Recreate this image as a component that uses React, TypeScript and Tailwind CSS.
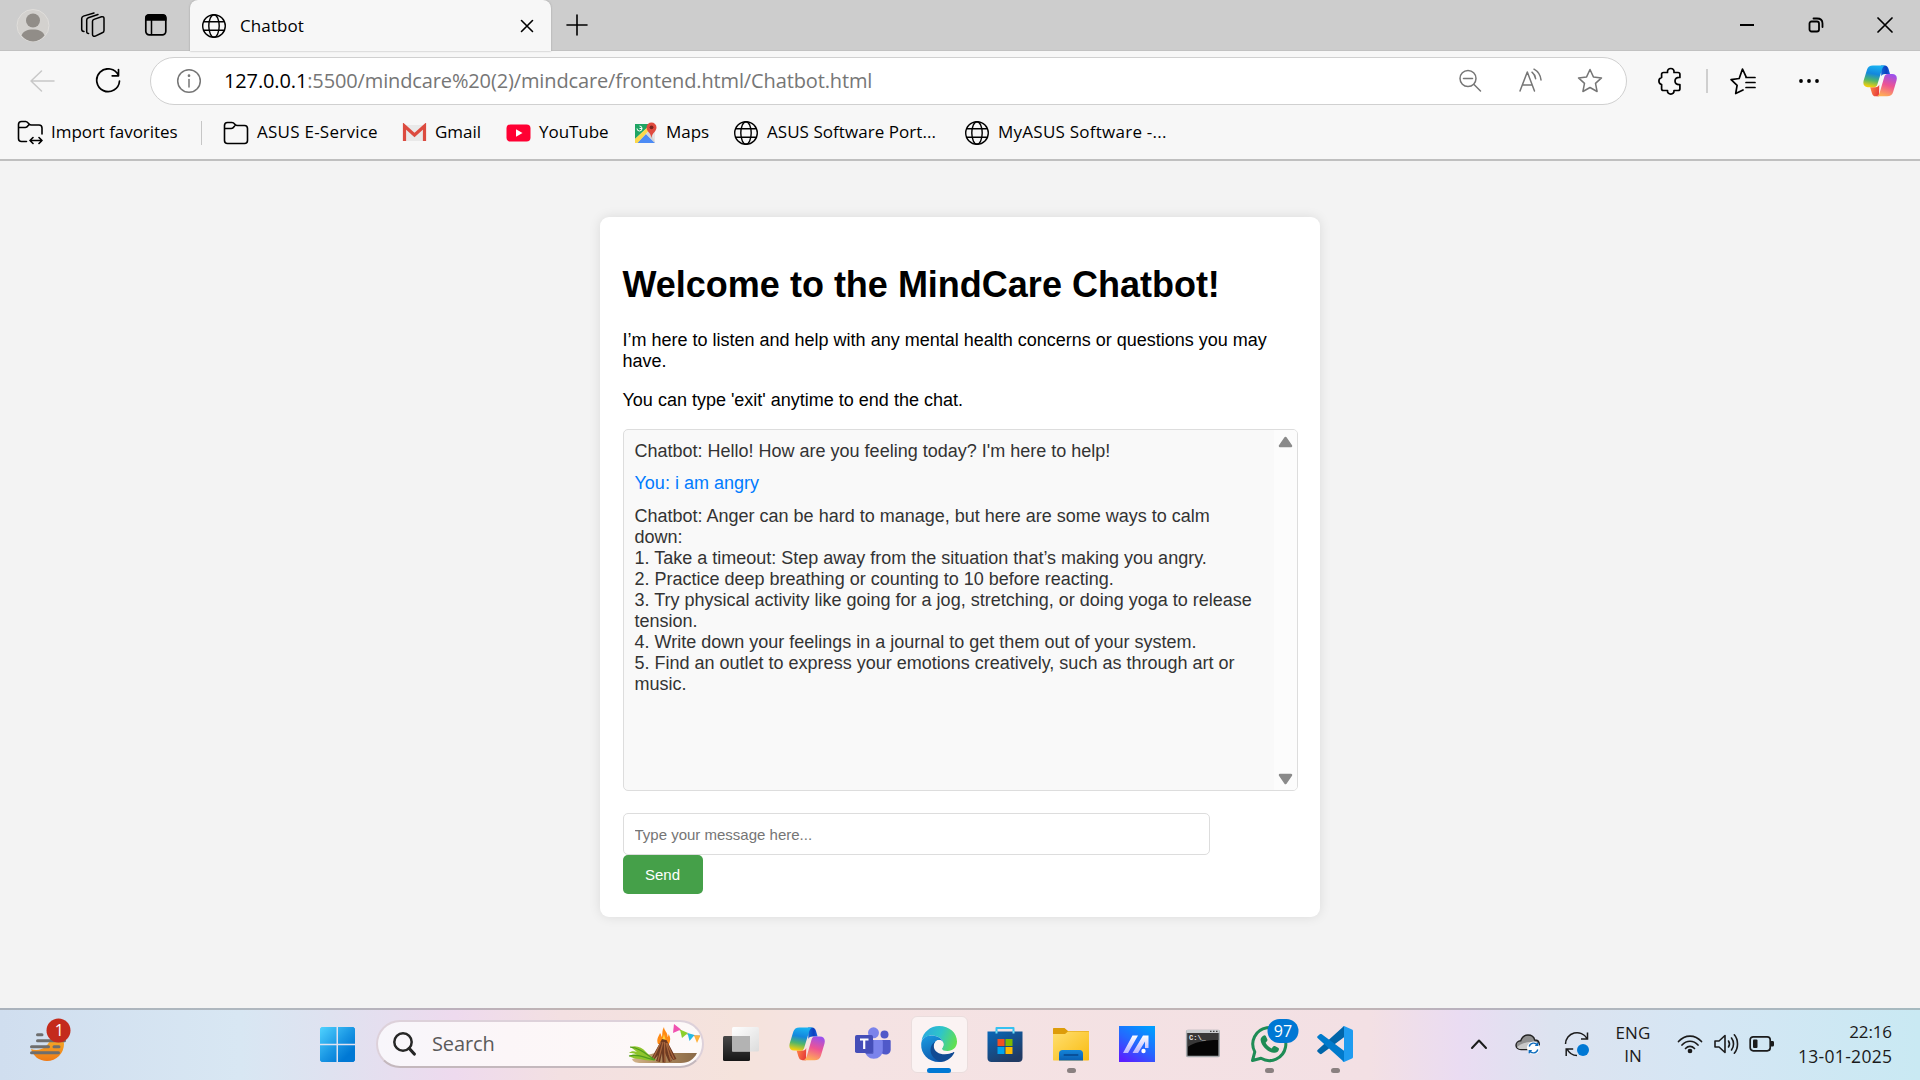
import React from "react";

type Kids = { children?: React.ReactNode };

function Line({
  w,
  h,
  vb,
  sw = 1.5,
  className = "",
  children,
}: Kids & { w: number; h: number; vb?: string; sw?: number; className?: string }) {
  return (
    <svg
      width={w}
      height={h}
      viewBox={vb ?? `0 0 ${w} ${h}`}
      fill="none"
      stroke="currentColor"
      strokeWidth={sw}
      strokeLinecap="round"
      strokeLinejoin="round"
      className={`block shrink-0 ${className}`}
    >
      {children}
    </svg>
  );
}

function Globe({ className = "" }: { className?: string }) {
  return (
    <Line w={26} h={26} sw={1.4} className={className}>
      <circle cx="13" cy="13" r="11.3" />
      <ellipse cx="13" cy="13" rx="5.2" ry="11.3" />
      <path d="M2.6 8.8h20.8M2.6 17.2h20.8" />
    </Line>
  );
}

function Copilot({ size, id }: { size: number; id: string }) {
  return (
    <svg width={size} height={size} viewBox="0 0 36 36" className="block shrink-0">
      <defs>
        <linearGradient id={id + "a"} x1="0.6" y1="0" x2="0.4" y2="1">
          <stop offset="0" stopColor="#1ab4f2" />
          <stop offset="0.4" stopColor="#1387dd" />
          <stop offset="0.7" stopColor="#4fb56c" />
          <stop offset="1" stopColor="#f2cf0c" />
        </linearGradient>
        <linearGradient id={id + "b"} x1="0.7" y1="0" x2="0.4" y2="1">
          <stop offset="0" stopColor="#9a50ee" />
          <stop offset="0.5" stopColor="#ee5493" />
          <stop offset="1" stopColor="#ffad55" />
        </linearGradient>
        <linearGradient id={id + "c"} x1="0" y1="0" x2="1" y2="0">
          <stop offset="0" stopColor="#1268d6" />
          <stop offset="0.6" stopColor="#0c40c0" />
          <stop offset="1" stopColor="#1a61de" />
        </linearGradient>
        <linearGradient id={id + "d"} x1="0" y1="0" x2="1" y2="0.4">
          <stop offset="0" stopColor="#ff8a48" />
          <stop offset="1" stopColor="#e8403a" />
        </linearGradient>
      </defs>
      <path d="M19 1.5h4c2.2 0 3.3 1.4 4 3.6l1.6 5.4h-5.2c-2 0-3.2.7-4 2.4z" fill={`url(#${id}c)`} />
      <path d="M17 34.2h-3.6c-2.2 0-3.3-1.4-4-3.6L7.6 24.500h5.800c2 0 3-.8 3.800-2.600z" fill={`url(#${id}d)`} />
      <path d="M10.500 1.500h14c-2.300 0-3.600 1.600-4.400 4.200l-4.900 16c-.6 2-1.700 2.800-3.600 2.800H5.200C1 24.500-.3 21.600.7 17.600L4.300 5.800c.9-2.900 2.900-4.300 6.200-4.300z" fill={`url(#${id}a)`} />
      <path d="M25.500 34.200h-12c2.300 0 3.500-1.600 4.300-4.200l4.700-16.200c.6-2.200 1.700-3.300 3.900-3.300h4.400c4.200 0 5.700 2.800 4.700 6.900l-3.600 12.300c-.9 3.100-3 4.500-6.400 4.500z" fill={`url(#${id}b)`} />
    </svg>
  );
}

function TabStrip() {
  return (
    <div className="flex h-[51px] shrink-0 border-b border-[#c2c2c2] bg-[#cdcdcd] text-black">
      <div className="flex w-[190px] items-center pl-4">
        <svg width="34" height="42" viewBox="0 0 34 42" className="block">
          <circle cx="17" cy="21.500" r="16" fill="#d3d1ce" stroke="#e0dedb" />
          <circle cx="17" cy="16.500" r="7" fill="#918d88" />
          <path d="M5.500 31.500C7 27.500 11 25.600 17 25.600s10 1.900 11.500 5.900A16 16 0 0 1 17 37.500a16 16 0 0 1-11.500-6z" fill="#918d88" />
        </svg>
        <Line w={26} h={26} sw={1.5} className="ml-[30px]">
          <path d="M12.500 9.300c0-1 .6-1.500 1.500-1.900l7.500-2.600c1.400-.4 2.500.2 2.500 1.600v12c0 1.300-.5 2-1.700 2.400l-7 3.300c-1.600.5-2.800-.1-2.800-1.600z" />
          <path d="M8.600 21.500c-1.200 0-1.900-.7-1.900-2V8c0-1.200.6-1.900 1.600-2.300L18 2.500" />
          <path d="M4 19.500c-1.500 0-2.300-.8-2.300-2.200V6.500c0-1.200.6-2 1.700-2.400L14 1" />
        </Line>
        <Line w={24} h={24} sw={1.7} className="ml-[38px]">
          <rect x="1.800" y="1.800" width="20" height="20" rx="3.500" />
          <path d="M2 4.500C2 3 3 2 4.500 2h14.700c1.500 0 2.500 1 2.500 2.500V7H2z" fill="currentColor" />
          <path d="M7.500 7v14.500" strokeWidth="1.500" />
        </Line>
      </div>
      <div className="flex h-[51px] w-[361px] items-center rounded-t-lg bg-[#f7f7f7] pl-[11px] shadow-[0_0_2px_#999]">
        <Globe />
        <span className="ml-[13px] text-[17px] tracking-[0.1px]">Chatbot</span>
        <Line w={14} h={14} sw={1.6} className="mr-[17px] ml-auto">
          <path d="M1.500 1.500l11 11M12.500 1.500l-11 11" />
        </Line>
      </div>
      <Line w={22} h={22} sw={1.6} className="mt-[14px] ml-[15px]">
        <path d="M11 1v20M1 11h20" />
      </Line>
      <div className="ml-auto flex items-center gap-[53px] pr-[27px]">
        <Line w={16} h={16} sw={2}>
          <path d="M1 8h14" strokeLinecap="butt" />
        </Line>
        <Line w={16} h={16} sw={1.8}>
          <rect x="1.500" y="4.500" width="9.500" height="10" rx="2" />
          <path d="M5.500 1.500h3.500c3.500 0 5.500 1.800 5.500 5V10" />
        </Line>
        <Line w={16} h={16} sw={1.7}>
          <path d="M1 1l14 14M15 1L1 15" />
        </Line>
      </div>
    </div>
  );
}

function Toolbar() {
  return (
    <div className="flex h-[60px] shrink-0 items-center">
      <Line w={26} h={24} sw={1.5} className="ml-[29px] text-[#c8c8c8]">
        <path d="M12.500 2L2 12l10.500 10M2 12h23" />
      </Line>
      <Line w={26} h={26} sw={1.7} className="ml-[40px] text-black">
        <path d="M23.500 7.500A11.400 11.400 0 1 0 24.500 13M23.500 1.500v6.300h-6.300" />
      </Line>
      <div className="ml-[29px] flex h-12 w-[1477px] items-center rounded-full border border-[#d0d0d0] bg-white pl-[25px] text-[#767676]">
        <Line w={26} h={26} sw={1.5}>
          <circle cx="13" cy="13" r="11.300" />
          <path d="M13 11.500V19" />
          <circle cx="13" cy="7.700" r=".6" fill="currentColor" />
        </Line>
        <span className="ml-[22px] text-[20px] tracking-[-0.13px] whitespace-nowrap">
          <span className="text-black">127.0.0.1</span>:5500/mindcare%20(2)/mindcare/frontend.html/Chatbot.html
        </span>
        <Line w={24} h={24} sw={1.5} className="ml-auto">
          <circle cx="10" cy="9.500" r="8" />
          <path d="M16 15.500l6.500 6.500M5.500 9.500h9" />
        </Line>
        <Line w={26} h={26} sw={1.5} className="ml-[36px]">
          <path d="M2 23L9.300 4 16.500 23M4.600 17h9.500M14 4.200c2 1.600 3.200 3.600 3.600 6.500M16 1.200c4 2.200 6.400 5.800 7 10.700" />
        </Line>
        <Line w={26} h={26} sw={1.5} className="mr-[23px] ml-[33px]">
          <path d="M13 1.500l3.400 7.400 8.100 1-6 5.500 1.600 8.100-7.100-4-7.100 4 1.600-8.100-6-5.500 8.100-1z" />
        </Line>
      </div>
      <Line w={26} h={28} sw={1.7} className="ml-[31px] text-black">
        <path d="M5.500 5.500h4c-.3-2.600 1.100-4 3.300-4s3.500 1.400 3.200 4h4c1.100 0 1.900.7 1.900 1.800V10.500c-3.300-.3-4.900 1.200-4.900 3.500s1.600 3.800 4.900 3.500v4.200c0 1.200-.8 1.800-1.900 1.800h-4c.2 2.400-1.200 3.600-3.200 3.600s-3.500-1.200-3.300-3.600h-4c-1.100 0-1.900-.7-1.900-1.800V17.500c-1.900-.6-2.700-1.800-2.700-3.500s.8-2.900 2.700-3.500V7.300c0-1.100.8-1.800 1.900-1.800z" />
      </Line>
      <div className="ml-[22px] h-6 w-[2px] bg-[#cfcfcf]" />
      <Line w={26} h={28} sw={1.7} className="ml-[22px] text-black">
        <path d="M13 23l-7.300 3.500 1.400-8.200-6-5.600 8.100-1.200L12.500 2l3.600 7.800M16 10.500h9M16 15.500h9M16 20.500h9" />
      </Line>
      <svg width="22" height="6" viewBox="0 0 22 6" className="ml-[42px] block">
        <circle cx="3" cy="3" r="1.900" />
        <circle cx="11" cy="3" r="1.900" />
        <circle cx="19" cy="3" r="1.900" />
      </svg>
      <div className="ml-[43px]">
        <Copilot size={34} id="tb" />
      </div>
    </div>
  );
}

function Folder({ arrows = false }: { arrows?: boolean }) {
  return (
    <Line w={26} h={26} sw={1.6}>
      {arrows ? (
        <path d="M9.500 21.500H4.500c-2 0-3-1-3-3V4.500c0-2 1-3 3-3h4.300c1.300 0 2 .8 3 2.200.7 1 1.500 1.300 2.700 1.300h7.500c2 0 3 1 3 3v6M1.500 7.500h6.800c1.500 0 2-.7 3.200-2.300M13 20.500h12M16 17.500l-3 3 3 3M22 17.500l3 3-3 3" />
      ) : (
        <path d="M4.500 23.500h17c2 0 3-1 3-3V8.500c0-2-1-3-3-3h-7c-1.200 0-2-.3-2.700-1.300C10.800 2.800 10 2.500 8.800 2.500H4.500c-2 0-3 1-3 3v15c0 2 1 3 3 3zM1.500 8.500h6.800c1.500 0 2-.7 3.200-2.300" />
      )}
    </Line>
  );
}

function Bookmark({
  icon,
  width,
  label,
  spacing = "tracking-[-0.05px]",
}: {
  icon: React.ReactNode;
  width: string;
  label: string;
  spacing?: string;
}) {
  return (
    <div className={`flex shrink-0 items-center gap-2 ${width}`}>
      {icon}
      <span className={`-mt-[2px] text-[17px] whitespace-nowrap ${spacing}`}>{label}</span>
    </div>
  );
}

function Bookmarks() {
  return (
    <div className="flex h-[50px] shrink-0 items-center border-b-2 border-[#bfbfbf] pb-1 pl-[17px] text-black">
      <Bookmark width="w-[184px]" icon={<Folder arrows />} label="Import favorites" />
      <div className="mr-[21px] h-6 w-px bg-[#c6c6c6]" />
      <Bookmark width="w-[179px]" icon={<Folder />} label="ASUS E-Service" spacing="tracking-[0.25px]" />
      <Bookmark
        width="w-[104px]"
        label="Gmail"
        icon={
          <svg width="25" height="20" viewBox="0 0 25 20" className="block">
            <path d="M2 2h21v16H2z" fill="#e9e9e9" />
            <path d="M2.500 18V3l10 9 10-9v15" fill="none" stroke="#dc4b3f" strokeWidth="3.200" />
          </svg>
        }
      />
      <Bookmark
        width="w-[127px]"
        label="YouTube"
        icon={
          <svg width="25" height="18" viewBox="0 0 25 18" className="block">
            <rect x="0.500" y="0.500" width="24" height="17" rx="4" fill="#ff0033" />
            <path d="M10 5.200l6.500 3.800-6.500 3.800z" fill="#fff" />
          </svg>
        }
      />
      <Bookmark
        width="w-[100px]"
        label="Maps"
        icon={
          <svg width="25" height="24" viewBox="0 0 25 24" className="block">
            <path d="M2 3h20v19H2z" fill="#e5e5e5" />
            <path d="M2 3h16L2 18z" fill="#1fa463" />
            <path d="M4 22l9-9 9 9z" fill="#4c8bf5" />
            <path d="M2 18L17 4l2 2L4.500 22H2z" fill="#fbd84b" />
            <path d="M13 13l4-4 5 13z" fill="#d3d3d3" />
            <path d="M18.500 1.500a5 5 0 0 1 5 5c0 4-4.200 5-5 10.500-.8-5.500-5-6.500-5-10.500a5 5 0 0 1 5-5z" fill="#e04b3f" />
            <circle cx="18.500" cy="6.300" r="1.900" fill="#7b231e" />
            <path d="M4 7.500a2.500 2.500 0 1 0 2.500-2.500M6.500 7.500H9" stroke="#fff" strokeWidth="1" fill="none" />
          </svg>
        }
      />
      <Bookmark width="w-[231px]" icon={<Globe />} label="ASUS Software Port..." spacing="tracking-[0.05px]" />
      <Bookmark width="w-[210px]" icon={<Globe />} label="MyASUS Software -..." spacing="tracking-[0.25px]" />
    </div>
  );
}

const tips = [
  "Chatbot: Anger can be hard to manage, but here are some ways to calm down:",
  "1. Take a timeout: Step away from the situation that’s making you angry.",
  "2. Practice deep breathing or counting to 10 before reacting.",
  "3. Try physical activity like going for a jog, stretching, or doing yoga to release tension.",
  "4. Write down your feelings in a journal to get them out of your system.",
  "5. Find an outlet to express your emotions creatively, such as through art or music.",
];

function ChatCard() {
  return (
    <div className="mt-14 flex h-[700px] w-[720px] flex-col rounded-[9px] bg-white px-[22.5px] pt-[23px] font-['Liberation_Sans',Arial,sans-serif] text-[18px] leading-[21px] text-black shadow-[0_0_12px_rgba(0,0,0,0.1)]">
      <h1 className="mt-6 text-[36px] leading-[41px] font-bold whitespace-nowrap">Welcome to the MindCare Chatbot!</h1>
      <p className="mt-[25px]">I’m here to listen and help with any mental health concerns or questions you may have.</p>
      <p className="mt-[18px]">You can type 'exit' anytime to end the chat.</p>
      <div className="mt-[18px] flex h-[362px] w-[675px] shrink-0 overflow-hidden rounded-[5px] border border-[#dddddd] bg-[#f9f9f9] text-[#333333]">
        <div className="flex w-[650px] flex-col gap-[11px] py-[11px] pr-[11px] pl-[11px]">
          <p>Chatbot: Hello! How are you feeling today? I'm here to help!</p>
          <p className="text-[#007bff]">You: i am angry</p>
          <div className="mt-[1px]">
            {tips.map((t) => (
              <p key={t}>{t}</p>
            ))}
          </div>
        </div>
        <div className="flex flex-1 flex-col items-center justify-between bg-[#fcfcfc] pt-[5px] pb-1">
          <svg width="15" height="13" viewBox="0 0 15 13" className="block">
            <path d="M7.500 3L13 11H2z" fill="#8a8a8a" stroke="#8a8a8a" strokeWidth="2.500" strokeLinejoin="round" />
          </svg>
          <svg width="15" height="13" viewBox="0 0 15 13" className="block">
            <path d="M7.500 10L13 2H2z" fill="#8a8a8a" stroke="#8a8a8a" strokeWidth="2.500" strokeLinejoin="round" />
          </svg>
        </div>
      </div>
      <input
        placeholder="Type your message here..."
        className="mt-[22px] h-[42px] w-[587px] shrink-0 rounded-[5px] border border-[#dddddd] bg-white px-[11px] text-[15px] placeholder:text-[#757575]"
      />
      <button className="h-[39px] w-[80px] shrink-0 rounded-[5px] bg-[#45a049] text-[15px] text-white">Send</button>
    </div>
  );
}

function TaskIcon({ children, dot = false, active = false }: Kids & { dot?: boolean; active?: boolean }) {
  return (
    <div className="flex w-[66px] justify-center">
      <div
        className={`flex h-[57px] w-[57px] flex-col items-center rounded-md ${
          active ? "border border-[#eadddd] bg-[#fbf3f3] pt-[9px]" : "pt-[10px]"
        }`}
      >
        {children}
        {active && <div className="mt-[6px] h-[5px] w-6 shrink-0 rounded-full bg-[#0078d4]" />}
        {dot && <div className="mt-[6px] h-[5px] w-[9px] shrink-0 rounded-full bg-[#8a8080]" />}
      </div>
    </div>
  );
}

function Svg36({ children }: Kids) {
  return (
    <svg width="36" height="36" viewBox="0 0 36 36" className="block shrink-0 overflow-visible">
      {children}
    </svg>
  );
}

function Campfire() {
  return (
    <svg width="74" height="44" viewBox="0 0 74 44" className="block">
      <defs>
        <linearGradient id="sand" x1="0" x2="1">
          <stop offset="0" stopColor="#d3b48c" />
          <stop offset="0.500" stopColor="#a98559" />
          <stop offset="1" stopColor="#8a6a48" />
        </linearGradient>
      </defs>
      <path d="M28 31h42c-3 6-8 10-16 10H14c-5 0-8-1-9-4z" fill="url(#sand)" />
      <path d="M31 22c-2-5 1-8 2-11 1.500 2 1 3 2 4 .5-4 0-7 2-10 0 4 4 5 3.500 10 1-1 1-2 1-3 2.500 4 2 7 0 11z" fill="#ff8a14" />
      <path d="M34 24c-1-4 2-7 3-12 1 5 3.500 8 2 12z" fill="#ffd23a" />
      <path d="M35 17l-11 20 3 1 4-5-2 6 4 1 2-9 .5 9.500h3L38 31l4 9 3-1-4-8 5 7 3.500-1-10-19z" fill="#6e3a22" />
      <path d="M34 20l-8 17M36 20l-5 19M37.500 20l.5 20M39 21l5 18M40 21l7 16" stroke="#a8663c" strokeWidth="1.200" />
      <path d="M3 25c6-2 12 0 16 5 3 3 6 6 10 8-8 1-12 0-16-1-4 0-8-1-11-3 2-1 5-2 8-1-3-2-5-2-8-2 2-2 5-2 8-1-2-2-4-3-7-5z" fill="#8fc52c" />
      <path d="M3 25c10 1 16 7 25 13M2 34c8-2 14 1 25 4" stroke="#4f9a1f" strokeWidth="1.200" fill="none" />
      <path d="M47 3c7 7 14 11 26 11" stroke="#8c6a50" strokeWidth=".7" fill="none" />
      <path d="M47 2l7 5.500-8 3.500z" fill="#f052b0" />
      <path d="M53 7.500l8 3.500-6 5z" fill="#8bd02c" />
      <path d="M60.500 11l7 2-5 6z" fill="#27b9e2" />
      <path d="M67 13.500h6.500L70 21z" fill="#ffb13b" />
    </svg>
  );
}

function Taskbar() {
  return (
    <div className="flex h-[72px] shrink-0 border-t-2 border-[#70707066] bg-[linear-gradient(90deg,#d0deef_0px,#d8e7f3_240px,#dfe2f0_330px,#eedaee_455px,#f3e0e2_560px,#f5e3dc_740px,#f5e3e3_840px,#f3e0e4_1370px,#eadcf2_1460px,#dde3f0_1550px,#d5e6f4_1700px,#c9e9f3_1920px)] bg-origin-border text-[#1b1b1b]">
      <div className="w-[320px] pt-2 pl-[28px]">
        <svg width="46" height="46" viewBox="0 0 46 46" className="block">
          <defs>
            <linearGradient id="moon" x1="0" y1="0" x2="0" y2="1">
              <stop offset="0" stopColor="#f7b52b" />
              <stop offset="1" stopColor="#ef7a16" />
            </linearGradient>
          </defs>
          <path d="M3 31c8 3 19-1 20-14 7-2 13 3 13 9A17 17 0 0 1 19 43C11 43 5 38 3 31z" fill="url(#moon)" />
          <path d="M9.500 16.800h4.500M9.500 22.800h27M3.500 28.800h17M26 28.800h5M3.500 34.800h27" stroke="#6e6e6e" strokeWidth="3" strokeLinecap="round" />
          <circle cx="30.500" cy="12.500" r="12" fill="#c42b1c" />
          <text x="31.300" y="18" textAnchor="middle" fontSize="16" fill="#fff">
            1
          </text>
        </svg>
      </div>
      <svg width="35" height="35" viewBox="0 0 35 35" className="mt-[17px] block">
        <defs>
          <linearGradient id="win" x1="0" y1="0" x2="35" y2="35" gradientUnits="userSpaceOnUse">
            <stop offset="0" stopColor="#50d3ff" />
            <stop offset="0.500" stopColor="#1a97e4" />
            <stop offset="0.800" stopColor="#0078d4" />
          </linearGradient>
        </defs>
        <path d="M1.500 0H16.500V16.700H0V1.500zM18 0H33.500L35 1.500V16.700H18zM0 18.300H16.500V35H1.500L0 33.500zM18 18.300H35V33.500L33.500 35H18z" fill="url(#win)" />
      </svg>
      <div className="mt-[10px] ml-[21px] flex h-12 w-[328px] items-center overflow-hidden rounded-full border-2 border-[#ddd1da] border-b-[#c4b8bd] bg-[linear-gradient(90deg,#f8f6fb,#fcf6f8_40%,#fdf9f8)] pl-[15px]">
        <Line w={23} h={24} sw={2.500} className="text-[#262626]">
          <circle cx="10" cy="10" r="8.700" />
          <path d="M16.300 16.500l5 5.500" strokeWidth="3.200" />
        </Line>
        <span className="ml-[16px] text-[20px] tracking-[-0.1px] text-[#5a5a5a]">Search</span>
        <div className="mr-[1px] ml-auto">
          <Campfire />
        </div>
      </div>
      <div className="ml-[4px] flex pt-[6px]">
        <TaskIcon>
          <Svg36>
            <defs>
              <linearGradient id="tv1" x1="0" y1="0" x2="0" y2="1">
                <stop offset="0" stopColor="#484848" />
                <stop offset="1" stopColor="#161616" />
              </linearGradient>
              <linearGradient id="tv2" x1="0" y1="0" x2="1" y2="1">
                <stop offset="0" stopColor="#fff" />
                <stop offset="1" stopColor="#dcdcdc" />
              </linearGradient>
            </defs>
            <rect x="0" y="10" width="27" height="25" rx="1.500" fill="url(#tv1)" />
            <rect x="9" y="1" width="27" height="24.500" rx="1.500" fill="url(#tv2)" />
            <path d="M9 10h18v15.500H9z" fill="#b3b3b3" />
          </Svg36>
        </TaskIcon>
        <TaskIcon>
          <Copilot size={36} id="tk" />
        </TaskIcon>
        <TaskIcon>
          <Svg36>
            <circle cx="29.500" cy="8.500" r="4" fill="#5059c9" />
            <path d="M23 14h11.500c.8 0 1.200.5 1.200 1.200v8.300c0 3-2.300 5-5.200 5S26 27 25 25z" fill="#5059c9" />
            <circle cx="18.500" cy="6.800" r="5.500" fill="#7b83eb" />
            <path d="M10 14h16.500c.8 0 1.300.5 1.300 1.300V24c0 5-4 8.800-9 8.800S10 29 10 24z" fill="#7b83eb" />
            <path d="M10 14h8.500v12.500c0 1-.6 1.500-1.500 1.500h-6c-.7-1-1-2.500-1-4z" fill="#5660c4" />
            <rect x="0" y="9" width="18" height="18" rx="1.800" fill="#454eb8" />
            <path d="M5 13.500h8.500M9.200 13.500V23" stroke="#fff" strokeWidth="2.200" fill="none" />
          </Svg36>
        </TaskIcon>
        <TaskIcon active>
          <Svg36>
            <defs>
              <linearGradient id="ed1" x1="0" y1="0.300" x2="1" y2="0.600">
                <stop offset="0" stopColor="#2aa9e0" />
                <stop offset="0.500" stopColor="#2fc5c8" />
                <stop offset="1" stopColor="#62e04e" />
              </linearGradient>
              <linearGradient id="ed2" x1="0" y1="0" x2="0.400" y2="1">
                <stop offset="0" stopColor="#1b9de2" />
                <stop offset="1" stopColor="#0f5cb0" />
              </linearGradient>
            </defs>
            <path d="M.5 15C2 6 9.500 0 18 0c10.500 0 18 7 18 15.500 0 6-4.500 9.500-9.500 9.500-3.500 0-5.500-1-5.500-2.300 0-1 1.500-1.500 1.500-4.200C22.500 13 17 9.500 11 9.500 6 9.500 2 12 .5 15z" fill="url(#ed1)" />
            <path d="M.2 18C.5 12.500 5 9.500 10.500 9.500c6.500 0 12 4 12 8.500 0-2-2-4-4.500-4-3.500 0-5.500 4-5.500 8 0 7 4 12 9.500 13.500-1.300.4-2.600.5-4 .5C7.500 36-.4 28 .2 18z" fill="url(#ed2)" />
            <path d="M14.500 15.500c-1.500 1.500-2 3.500-1.700 5.500.6 4.500 5 7.300 11 7.300 4 0 7-1.300 8.500-2.200.7-.4 1.200.2.900.8C30.500 32 26 35 21.500 35.700 15 35.500 9.500 30 9.500 24c0-4 2-7 5-8.500z" fill="#114a93" />
            <path d="M22.500 18c-.2-2.500-2-4-4.500-4-3 0-4.500 2.500-4.500 5 0 5 5.500 8.500 11.500 8.500 4 0 6.500-.8 8-1.700-9 1-12-1.300-12-3 0-1.100 1.600-2 1.500-4.800z" fill="#fbf3f3" />
          </Svg36>
        </TaskIcon>
        <TaskIcon>
          <Svg36>
            <defs>
              <linearGradient id="st" x1="0" y1="0" x2="0.600" y2="1">
                <stop offset="0" stopColor="#0867b8" />
                <stop offset="1" stopColor="#213a63" />
              </linearGradient>
            </defs>
            <path d="M9.500 7V2h17v5" fill="none" stroke="#35c1f1" strokeWidth="2" strokeLinejoin="round" />
            <path d="M.5 5.500h35V32c0 2.500-1.500 4-4 4h-27c-2.500 0-4-1.500-4-4z" fill="url(#st)" />
            <path d="M9.500 5v2.500M26.500 5v2.500" stroke="#6ee0f5" strokeWidth="2" />
            <path d="M10.500 13h7v7h-7z" fill="#f25022" />
            <path d="M18.500 13h7v7h-7z" fill="#7fba00" />
            <path d="M10.500 21h7v7h-7z" fill="#00a4ef" />
            <path d="M18.500 21h7v7h-7z" fill="#ffb900" />
          </Svg36>
        </TaskIcon>
        <TaskIcon dot>
          <Svg36>
            <defs>
              <linearGradient id="fo" x1="0" y1="0" x2="1" y2="1">
                <stop offset="0" stopColor="#ffdf70" />
                <stop offset="1" stopColor="#f9bb10" />
              </linearGradient>
              <linearGradient id="fb" x1="0" y1="0" x2="0" y2="1">
                <stop offset="0" stopColor="#1484d8" />
                <stop offset="1" stopColor="#0a60b4" />
              </linearGradient>
            </defs>
            <path d="M0 3c0-.6.400-1 1-1h10.500L15 5h20c.6 0 1 .4 1 1v6H0z" fill="#dd9c0a" />
            <path d="M0 8h12l3-2.500h20c.6 0 1 .4 1 1V33.500c0 .6-.4 1-1 1H1c-.6 0-1-.4-1-1z" fill="url(#fo)" />
            <path d="M6 34.500V27.500c0-2 1.300-3.500 3.500-3.500h17c2.200 0 3.500 1.500 3.500 3.500v7z" fill="url(#fb)" />
            <path d="M11.500 29h13" stroke="#08509a" strokeWidth="2" strokeLinecap="round" />
          </Svg36>
        </TaskIcon>
        <TaskIcon>
          <Svg36>
            <defs>
              <linearGradient id="as" x1="0.200" y1="1" x2="0.800" y2="0">
                <stop offset="0" stopColor="#5a1fff" />
                <stop offset="0.500" stopColor="#2468ff" />
                <stop offset="1" stopColor="#009cff" />
              </linearGradient>
              <linearGradient id="aw" x1="0" y1="1" x2="0" y2="0">
                <stop offset="0" stopColor="#b9b2ff" />
                <stop offset="1" stopColor="#fff" />
              </linearGradient>
            </defs>
            <path d="M0 0h36v36H0z" fill="url(#as)" />
            <path d="M4 27L13.500 9.500H19L9 27zM13.500 27L24 9.500h5.500V22H26v-6.500L19 27z" fill="url(#aw)" />
            <circle cx="24.500" cy="25" r="2.200" fill="#fff" />
          </Svg36>
        </TaskIcon>
        <TaskIcon>
          <Svg36>
            <rect x="1.700" y="4.500" width="32.500" height="26" rx="1" fill="#050505" stroke="#a5a8ab" strokeWidth="1.600" />
            <path d="M1.500 4h33v3h-33z" fill="#c9cccf" />
            <path d="M2.500 7h31v7C20 14 10 16 2.500 21z" fill="#4a4a4a" opacity=".75" />
            <path d="M25 5.400h1.500M28 5.400h1.500M31 5.400h1.500" stroke="#444" strokeWidth="1.200" />
            <text x="4" y="14" fontSize="7" fontWeight="700" fill="#e8e8e8" fontFamily="Liberation Mono">
              C:\_
            </text>
          </Svg36>
        </TaskIcon>
        <TaskIcon dot>
          <Svg36>
            <path d="M1.500 34.500l2.300-8.600A16.500 16.500 0 1 1 10 32.300z" fill="none" stroke="#1e8c55" strokeWidth="3" strokeLinejoin="round" />
            <path d="M12.300 9.700c.8-.8 2-.7 2.500.3l1.500 3.300c.3.700.1 1.300-.4 1.900l-1.300 1.600c1.300 2.500 3.200 4.300 6 5.600l1.500-1.900c.5-.6 1.100-.8 1.800-.4l3.200 1.600c.8.4 1 1 .8 1.900-.5 2.300-2.700 3.500-5 3.200C16.500 26 10.500 20.500 9.600 14c-.2-1.800 1.200-3.400 2.700-4.300z" fill="#1e8c55" />
            <rect x="16.500" y="-7" width="31" height="24" rx="12" fill="#0078d4" />
            <text x="32" y="10.500" textAnchor="middle" fontSize="16" fill="#fff">
              97
            </text>
          </Svg36>
        </TaskIcon>
        <TaskIcon dot>
          <Svg36>
            <path d="M27 0L.8 23.700c-.8.700-.8 1.500 0 2.200l2 1.800c.7.600 1.400.5 2 .1L28 10.500z" fill="#0065a9" />
            <path d="M27 36L.8 12.300c-.8-.7-.8-1.500 0-2.200l2-1.800c.7-.6 1.400-.5 2-.1L28 25.500z" fill="#007acc" />
            <path d="M27 0l8 3.500c.6.300 1 .8 1 1.500v26c0 .7-.4 1.200-1 1.500L27 36c-.8.300-1.800 0-2.500-.7.900.9 2.500.3 2.500-1V1.700c0-1.300-1.600-1.900-2.500-1 .7-.7 1.700-1 2.500-.7z" fill="#1f9cf0" />
          </Svg36>
        </TaskIcon>
      </div>
      <div className="ml-auto flex items-center pr-[28px] pb-[2px]">
        <Line w={18} h={12} sw={2}>
          <path d="M2 10l7-7.500 7 7.500" />
        </Line>
        <svg width="26" height="22" viewBox="0 0 26 22" className="ml-[27px] block">
          <path d="M6 16.500c-3 0-5-2-5-4.300s2-4.400 4.700-4.400C7 4 10 2 13 2c3.500 0 6 2 6.700 5 2.700 0 4.600 1.700 4.600 4.500 0 3-2 5-4.600 5z" fill="#8f8f8f" stroke="#222" strokeWidth="1.400" />
          <path d="M2 14c4-3 8-5 14-5l3 7H6c-2 0-3-.5-4-2z" fill="#c9c9c9" />
          <circle cx="18.500" cy="15" r="6.500" fill="#fff" />
          <path d="M14.200 13.500a4.600 4.600 0 0 1 8.300-1.300M22.800 16.500a4.600 4.600 0 0 1-8.300 1.300M22.700 9.800v2.600h-2.500M14.300 20.200v-2.600h2.500" stroke="#0f6cbd" strokeWidth="1.400" fill="none" />
        </svg>
        <svg width="26" height="26" viewBox="0 0 26 26" className="ml-[23px] block">
          <path d="M1.500 13A11.500 11.500 0 0 1 23 7.500M23.500 1.500V8H17M13 24.500C8.500 24.500 5 22 3 18M2.200 25v-7h7" stroke="#1b1b1b" strokeWidth="1.500" fill="none" />
          <circle cx="19" cy="19" r="6" fill="#0078d4" />
        </svg>
        <div className="ml-[25px] w-[36px] text-center text-[17px] leading-[23px] tracking-[0.1px]">
          ENG
          <br />
          IN
        </div>
        <Line w={26} h={20} sw={1.700} className="ml-[26px]">
          <path d="M1.500 7.500C8 .2 18 .2 24.500 7.500M5 11c4.600-5 11.400-5 16 0M8.500 14.500c2.700-2.800 6.300-2.800 9 0" />
          <circle cx="13" cy="17" r="1.500" fill="currentColor" />
        </Line>
        <Line w={26} h={22} sw={1.600} className="ml-[10px]">
          <path d="M2 8h4l6-5.500v17L6 14H2zM15.500 8c1.200 1.800 1.200 4.200 0 6M18.500 5c2.700 3.500 2.700 8.500 0 12M21.300 1.800c4.300 5 4.300 13.400 0 18.400" />
        </Line>
        <svg width="26" height="18" viewBox="0 0 26 18" className="ml-[10px] block">
          <rect x="1.200" y="1.800" width="20" height="14" rx="3" fill="none" stroke="#1b1b1b" strokeWidth="1.700" />
          <rect x="4" y="4.500" width="4.500" height="8.600" rx="1" fill="#1b1b1b" />
          <path d="M22 6h1.500c1 0 1.500.7 1.500 1.500v2.600c0 .9-.5 1.500-1.500 1.500H22z" fill="#1b1b1b" />
        </svg>
        <div className="ml-[23px] w-[94px] text-right leading-6 tracking-[0.05px] whitespace-nowrap">
          <div className="text-[17px] tracking-[-0.1px]">22:16</div>
          <div className="text-[17.500px] tracking-[0.3px]">13-01-2025</div>
        </div>
      </div>
    </div>
  );
}

export default function App() {
  return (
    <div className="flex h-[1080px] w-[1920px] flex-col overflow-hidden bg-[#f7f7f7] font-['Open_Sans','Noto_Sans',sans-serif]">
      <TabStrip />
      <Toolbar />
      <Bookmarks />
      <main className="flex min-h-0 flex-1 flex-col items-center bg-[#f3f3f3]">
        <ChatCard />
      </main>
      <Taskbar />
    </div>
  );
}
